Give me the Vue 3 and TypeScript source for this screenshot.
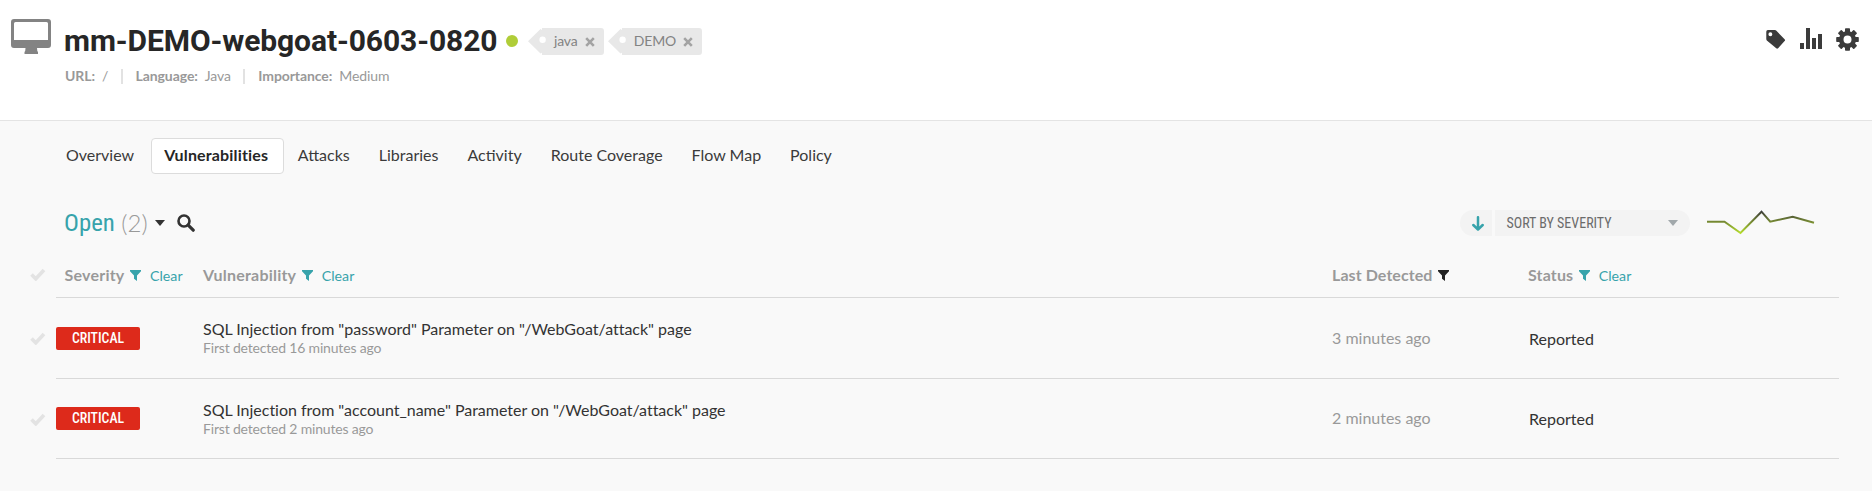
<script setup lang="ts">
interface Fact { label: string; value: string }
interface Row { title: string; first: string; last: string; status: string }

const facts: Fact[] = [
  { label: 'URL:', value: '/' },
  { label: 'Language:', value: 'Java' },
  { label: 'Importance:', value: 'Medium' },
]
const tags: string[] = ['java', 'DEMO']
const tabs: string[] = ['Overview', 'Vulnerabilities', 'Attacks', 'Libraries', 'Activity', 'Route Coverage', 'Flow Map', 'Policy']
const activeTab = 'Vulnerabilities'
const rows: Row[] = [
  { title: 'SQL Injection from "password" Parameter on "/WebGoat/attack" page', first: 'First detected 16 minutes ago', last: '3 minutes ago', status: 'Reported' },
  { title: 'SQL Injection from "account_name" Parameter on "/WebGoat/attack" page', first: 'First detected 2 minutes ago', last: '2 minutes ago', status: 'Reported' },
]
const columns = [
  { name: 'Severity', filtered: true },
  { name: 'Vulnerability', filtered: true },
  { name: 'Last Detected', filtered: false },
  { name: 'Status', filtered: true },
]
const teeth: number[] = [0, 45, 90, 135, 180, 225, 270, 315]
</script>

<template>
  <div class="page">
    <header class="head">
      <svg class="monitor" width="40" height="35" viewBox="0 0 40 35">
        <path fill="#838383" fill-rule="evenodd" d="M3 0h34a3 3 0 0 1 3 3v23a3 3 0 0 1-3 3H26q0 3 1 4v2H13.500v-2q1-1 1-4H3a3 3 0 0 1-3-3V3a3 3 0 0 1 3-3zM4.500 3A1.500 1.500 0 0 0 3 4.500V21h34V4.500A1.500 1.500 0 0 0 35.500 3z" />
      </svg>
      <div class="ident">
        <div class="title-row">
          <h1 class="title">mm-DEMO-webgoat-0603-0820</h1>
          <span class="dot"></span>
          <span v-for="tag in tags" :key="tag" class="tag">
            <svg class="tag-tip" width="20" height="27" viewBox="0 0 20 27">
              <path fill="#e8e8e8" d="M0 13.200L12.500 1l3.500 2.500v20L12.500 25.500z" />
              <circle cx="14.600" cy="11.700" r="3.200" fill="#fff" />
            </svg>
            <span class="tag-name">{{ tag }}</span>
            <svg class="tag-x" width="10" height="10" viewBox="0 0 10 10"><path d="M1.200 1.200l7.600 7.600M8.800 1.200L1.200 8.800" stroke="#a3a3a3" stroke-width="2.600" /></svg>
          </span>
        </div>
        <div class="facts">
          <span v-for="f in facts" :key="f.label" class="fact"><b>{{ f.label }}</b><span>{{ f.value }}</span></span>
        </div>
      </div>
      <div class="actions">
        <svg width="20" height="19" viewBox="0 0 21.500 20" preserveAspectRatio="none">
          <path fill="#3b3b3b" fill-rule="evenodd" d="M2 0h7.500q1 0 1.700.8l8.800 8.900q1 1 0 2l-7 7.500q-1 1-2 0L.9 11Q.3 10.300.3 9.300V1.800Q.3 0 2 0zM4.700 2.400a2.100 2.100 0 1 0 0 4.200 2.100 2.100 0 0 0 0-4.200z" />
        </svg>
        <svg class="bars" width="22" height="21" viewBox="0 0 22 21">
          <path fill="#3b3b3b" d="M0 15h4v6H0zM6 0h4v21H6zM12 10h4v11h-4zM18 6h4v15h-4z" />
        </svg>
        <svg width="23" height="23" viewBox="0 0 23 23">
          <g fill="#3b3b3b"><rect v-for="a in teeth" :key="a" x="9" y="0.200" width="5" height="6" rx="0.800" :transform="`rotate(${a} 11.500 11.500)`" /></g>
          <circle cx="11.500" cy="11.500" r="6.300" fill="none" stroke="#3b3b3b" stroke-width="4.600" />
        </svg>
      </div>
    </header>

    <nav class="tabs">
      <a v-for="t in tabs" :key="t" class="tab" :class="{ active: t === activeTab }">{{ t }}</a>
    </nav>

    <div class="toolbar">
      <span class="open">Open</span><span class="count">(2)</span>
      <svg class="caret" width="10" height="6" viewBox="0 0 10 6"><path fill="#333" d="M0 0h10L5 6z" /></svg>
      <svg class="search" width="18" height="18" viewBox="0 0 18 18">
        <circle cx="7" cy="7" r="5.500" fill="none" stroke="#333" stroke-width="2.600" />
        <path d="M11.200 11.200l5 5" stroke="#333" stroke-width="3.200" stroke-linecap="round" />
      </svg>
      <div class="sort-dir">
        <svg width="12" height="15" viewBox="0 0 12 15"><path fill="none" stroke="#37a3ab" stroke-width="2.500" stroke-linecap="round" stroke-linejoin="round" d="M6 1.200v12M1.300 9L6 13.500 10.700 9" /></svg>
      </div>
      <div class="sort-by">
        <span class="sort-text">SORT BY SEVERITY</span>
        <svg width="10" height="6" viewBox="0 0 10 6"><path fill="#a1a8ab" d="M0 0h10L5 6z" /></svg>
      </div>
      <svg class="spark" width="108" height="26" viewBox="0 0 108 26">
        <defs>
          <linearGradient id="trend" x1="0" y1="2" x2="0" y2="24" gradientUnits="userSpaceOnUse">
            <stop offset="0" stop-color="#3a3a3a" /><stop offset="1" stop-color="#b4dc2c" />
          </linearGradient>
        </defs>
        <path fill="none" stroke="url(#trend)" stroke-width="2" d="M0 12.700h17.500l16 11.300 21-21.300 8.700 10 22.500-5L107 13.700" />
      </svg>
    </div>

    <div class="line header-line">
      <svg class="check" width="16" height="13" viewBox="0 0 16 13"><path fill="none" stroke="#e3e3e3" stroke-width="3.600" d="M1.500 6.500l4.300 4.300L14 2" /></svg>
      <div class="grid">
        <div v-for="c in columns" :key="c.name" class="th">
          <span class="th-name">{{ c.name }}</span>
          <svg class="funnel" width="11" height="11" viewBox="0 0 11 11"><path :fill="c.filtered ? '#37a3ab' : '#222'" d="M0 0h11v1.200L7 5.400V11L4 8.700V5.400L0 1.200z" /></svg>
          <a v-if="c.filtered" class="clear">Clear</a>
        </div>
      </div>
    </div>
    <div v-for="r in rows" :key="r.title" class="line row">
      <svg class="check" width="16" height="13" viewBox="0 0 16 13"><path fill="none" stroke="#e3e3e3" stroke-width="3.600" d="M1.500 6.500l4.300 4.300L14 2" /></svg>
      <div class="grid">
        <div><span class="badge"><span class="badge-text">CRITICAL</span></span></div>
        <div class="vuln">
          <div class="vuln-title">{{ r.title }}</div>
          <div class="vuln-first">{{ r.first }}</div>
        </div>
        <div class="last">{{ r.last }}</div>
        <div class="status">{{ r.status }}</div>
      </div>
    </div>
  </div>
</template>

<style>
body { background: #f9f9f9; }
</style>

<style scoped>
.page { width: 1872px; height: 491px; overflow: hidden; background: #f9f9f9; font-family: Lato, "Open Sans", sans-serif; font-size: 16px; color: #333; box-sizing: border-box; }
.head { height: 121px; box-sizing: border-box; background: #fff; border-bottom: 1px solid #e4e4e4; display: flex; align-items: flex-start; padding: 19px 13px 0 11px; }
.monitor { margin-right: 13px; flex: none; }
.ident { flex: 1; }
.title-row { display: flex; align-items: center; height: 44px; }
.title { margin: 0 10px 0 0; width: 432px; font: 700 30px/44px Roboto, sans-serif; letter-spacing: -0.090px; color: #262626; white-space: nowrap; }
.dot { width: 12px; height: 12px; border-radius: 50%; background: #b0cd38; margin-right: 10px; }
.tag { display: flex; align-items: center; height: 27px; margin: 1px 4px 0 0; border-radius: 3px; background: linear-gradient(90deg, transparent 14px, #e8e8e8 14px); padding-right: 9px; }
.tag-tip { margin-right: 6px; }
.tag-name { font-size: 14px; letter-spacing: -0.150px; color: #838383; margin-right: 7.200px; line-height: 25px; height: 27px; }
.tag-x { margin-top: 1px; }
.facts { display: flex; margin-top: 6px; padding-left: 1px; font-size: 14px; letter-spacing: -0.080px; color: #999; }
.fact { display: flex; gap: 7px; height: 15px; line-height: 13px; }
.fact + .fact { border-left: 2px solid #e2e2e2; margin-left: 12.500px; padding-left: 12.800px; }
.actions { display: flex; align-items: center; gap: 14px; margin-top: 9px; }
.bars { margin-top: -2px; }
.tabs { display: flex; height: 37px; padding: 17px 0 0 51.500px; }
.tab { box-sizing: border-box; height: 36px; line-height: 32px; padding: 0 13.500px; border: 1px solid transparent; white-space: nowrap; color: #3b3b3b; }
.tab.active { background: #fff; border-color: #dcdcdc; border-radius: 4px; font-weight: 700; letter-spacing: 0.160px; color: #262626; padding: 0 14.500px 0 12.500px; margin: 0 -0.300px 0 2px; }
.toolbar { display: flex; align-items: center; height: 76px; padding: 20px 57px 0 64px; box-sizing: border-box; }
.open { font: 400 24.800px/30px "Roboto Condensed", Roboto, sans-serif; color: #37a3ab; margin-right: 6.500px; }
.count { font: 300 24px/30px Lato, sans-serif; color: #999; margin-right: 7px; }
.search { margin-left: 12px; }
.sort-dir { margin-left: auto; width: 32px; height: 26px; box-sizing: border-box; padding-left: 3px; border-radius: 13px 0 0 13px; background: #f3f3f3; display: flex; align-items: center; justify-content: center; }
.sort-by { margin-left: 3px; width: 195px; height: 26px; box-sizing: border-box; padding: 0 12px 0 11.500px; border-radius: 0 13px 13px 0; background: #f3f3f3; display: flex; align-items: center; justify-content: space-between; }
.sort-text { font: 400 14px/26px "Roboto Condensed", Roboto, sans-serif; color: #6b6b6b; }
.spark { margin-left: 17px; margin-top: -3px; }
.line { display: flex; align-items: center; padding-left: 30px; height: 80px; }
.header-line { height: 47px; }
.header-line + .row { height: 81px; }
.check { flex: none; margin-right: 10px; }
.grid { width: 1783px; height: 100%; box-sizing: border-box; border-bottom: 1px solid #d9d9d9; display: grid; grid-template-columns: 147px 1129px 196px 1fr; align-items: center; }
.th { display: flex; align-items: center; height: 24px; }
.th:first-child { padding-left: 8.500px; }
.th-name { font-weight: 700; letter-spacing: 0.150px; color: #999; margin-right: 5.500px; }
.th:nth-child(-n+2) .th-name { letter-spacing: 0.220px; }
.th:nth-child(3) .th-name { letter-spacing: 0.080px; }
.funnel { margin-top: 3px; }
.clear { font-size: 14.200px; color: #37a3ab; margin: 2px 0 0 9px; }
.badge { display: flex; align-items: center; justify-content: center; width: 84px; height: 23px; border-radius: 2px; background: #dd2a1b; }
.badge-text { font: 500 13.800px/23px "Roboto Condensed", Roboto, sans-serif; color: #fff; }
.vuln-title { font-size: 16px; line-height: 20px; letter-spacing: -0.015px; }
.vuln-first { font-size: 14px; line-height: 18px; letter-spacing: -0.180px; color: #999; }
.last { color: #999; margin-bottom: 2px; }
.status { padding-left: 1px; }
</style>
